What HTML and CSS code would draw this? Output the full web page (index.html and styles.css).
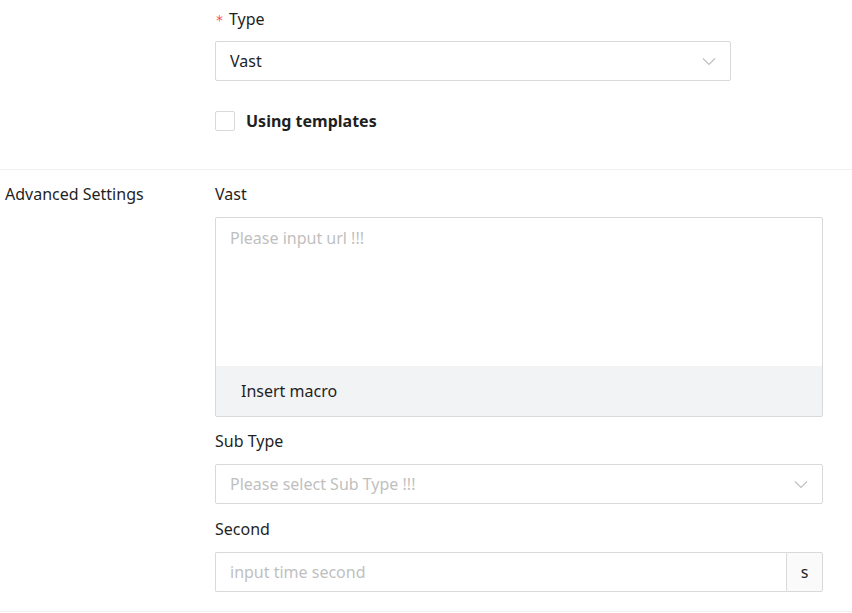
FILE: index.html
```html
<!DOCTYPE html>
<html>
<head>
<meta charset="utf-8">
<link rel="stylesheet" href="styles.css">
</head>
<body>
<div class="page">
  <section class="row row-top">
    <div class="side"></div>
    <div class="main">
      <div class="item">
        <div class="label label-top"><span class="req">*</span>Type</div>
        <div class="select narrow">
          <span class="value">Vast</span>
          <svg class="chev" width="14" height="9" viewBox="0 0 14 9"><path d="M1 1.5 L7 7.5 L13 1.5" fill="none" stroke="#bfbfbf" stroke-width="1.1"/></svg>
        </div>
      </div>
      <label class="check">
        <span class="box"></span>
        <span class="check-text">Using templates</span>
      </label>
    </div>
  </section>
  <section class="row row-adv">
    <div class="side"><div class="side-label">Advanced Settings</div></div>
    <div class="main">
      <div class="item item-ta">
        <div class="label">Vast</div>
        <div class="textarea">
          <div class="ta-body"><span class="ph">Please input url !!!</span></div>
          <div class="ta-bar">Insert macro</div>
        </div>
      </div>
      <div class="item">
        <div class="label">Sub Type</div>
        <div class="select">
          <span class="ph">Please select Sub Type !!!</span>
          <svg class="chev" width="14" height="9" viewBox="0 0 14 9"><path d="M1 1.5 L7 7.5 L13 1.5" fill="none" stroke="#bfbfbf" stroke-width="1.1"/></svg>
        </div>
      </div>
      <div class="item last">
        <div class="label">Second</div>
        <div class="input-group">
          <div class="input"><span class="ph">input time second</span></div>
          <div class="addon">s</div>
        </div>
      </div>
    </div>
  </section>
</div>
</body>
</html>
```
FILE: styles.css
```css
* { box-sizing: border-box; }
html, body { margin: 0; padding: 0; background: #fff; }
body {
  font-family: "Noto Sans", "Open Sans", sans-serif;
  font-size: 16px;
  color: #1f1f1f;
  width: 852px;
  height: 613px;
  overflow: hidden;
}
.page { display: flex; flex-direction: column; }
.row { display: flex; border-bottom: 1px solid #f0f0f0; }
.row-top { padding-top: 4px; padding-bottom: 38px; }
.row-adv { padding-top: 9px; padding-bottom: 19px; }
.side { width: 215px; flex: none; }
.side-label { padding-left: 5px; line-height: 30px; }
.main { width: 608px; display: flex; flex-direction: column; }
.item { display: flex; flex-direction: column; margin-bottom: 10px; }
.item-ta { margin-bottom: 9px; }
.item.last { margin-bottom: 0; }
.label { line-height: 30px; padding-bottom: 8px; }
.label-top { padding-bottom: 6px; }
.req { color: #ff4d4f; margin-left: 1px; margin-right: 6px; font-family: "DejaVu Sans", sans-serif; font-size: 14px; }
.select {
  height: 40px;
  border: 1px solid #d9d9d9;
  border-radius: 2px;
  display: flex;
  align-items: center;
  justify-content: space-between;
  padding: 0 14px 0 14px;
}
.select.narrow { width: 516px; }
.chev { flex: none; }
.ph { color: #bfbfbf; }
.check {
  display: flex;
  align-items: center;
  margin-top: 20px;
  height: 20px;
}
.box {
  width: 20px;
  height: 20px;
  border: 1px solid #d9d9d9;
  border-radius: 2px;
  margin-right: 11px;
  flex: none;
}
.check-text { font-weight: 700; }
.textarea {
  height: 200px;
  border: 1px solid #d9d9d9;
  border-radius: 2px;
  display: flex;
  flex-direction: column;
}
.ta-body { flex: 1; padding: 7px 14px; line-height: 26px; }
.ta-bar {
  height: 50px;
  background: #f2f3f5;
  display: flex;
  align-items: center;
  padding-left: 25px;
}
.input-group { display: flex; height: 40px; }
.input {
  flex: 1;
  border: 1px solid #d9d9d9;
  border-right: none;
  border-radius: 2px 0 0 2px;
  display: flex;
  align-items: center;
  padding-left: 14px;
}
.addon {
  width: 37px;
  border: 1px solid #d9d9d9;
  border-radius: 0 2px 2px 0;
  background: #fafafa;
  display: flex;
  align-items: center;
  justify-content: center;
}
```
